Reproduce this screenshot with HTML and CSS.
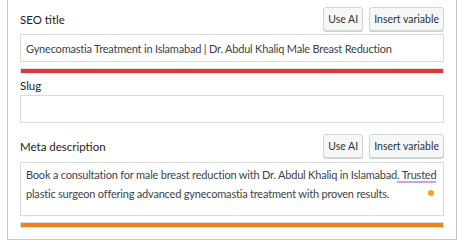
FILE: index.html
```html
<!DOCTYPE html>
<html lang="en">
<head>
  <meta charset="UTF-8" />
  <title>SEO fields</title>
  <link rel="stylesheet" href="styles.css">
</head>
<body>
  <div class="panel">
    <div class="field-head">
      <label for="seo-title">SEO title</label>
      <div class="actions">
        <button class="btn">Use AI</button>
        <button class="btn">Insert variable</button>
      </div>
    </div>
    <input type="text" id="seo-title" class="input" value="Gynecomastia Treatment in Islamabad | Dr. Abdul Khaliq Male Breast Reduction" />
    <div class="meter"><div class="meter-fill bad"></div></div>

    <label for="slug" class="plain-label">Slug</label>
    <input type="text" id="slug" class="input" value="" />

    <div class="field-head meta-head">
      <label for="meta">Meta description</label>
      <div class="actions">
        <button class="btn">Use AI</button>
        <button class="btn">Insert variable</button>
      </div>
    </div>
    <div class="textbox" id="meta">
      Book a consultation for male breast reduction with Dr. Abdul Khaliq in Islamabad<span class="hint">. Trusted</span><br>
      plastic surgeon offering advanced gynecomastia treatment with proven results.
      <span class="dot"></span>
    </div>
    <div class="meter"><div class="meter-fill ok"></div></div>
  </div>
</body>
</html>
```

FILE: styles.css
```css
:root {
  --border: #c9c9c9;
  --input-border: #dcdcde;
  --label: #1d2327;
  --text: #3c434a;
  --btn-bg: #f6f7f7;
  --red: #e0353b;
  --orange: #f0821e;
}

body {
  margin: 0;
  font-family: "Segoe UI", Lato, "Open Sans", sans-serif;
  font-size: 11px;
  background-color: #ffffff;
}

.panel {
  margin-left: 7px;
  width: 450px;
  box-sizing: border-box;
  border: 1px solid var(--border);
  border-top: none;
  padding: 7px 12px 11px 12px;
}

.field-head {
  display: flex;
  justify-content: space-between;
  align-items: center;
  height: 24px;
  margin-bottom: 3px;
}

.meta-head {
  margin-top: 11px;
  margin-bottom: 4px;
}

label {
  color: var(--label);
  font-size: 11.5px;
  line-height: 17px;
}

.plain-label {
  display: block;
  margin-top: 3px;
  margin-bottom: 1px;
}

.actions {
  display: flex;
  gap: 6px;
}

.btn {
  font-family: inherit;
  font-size: 10.5px;
  color: #2c3338;
  background-color: var(--btn-bg);
  border: 1px solid #d3d4d6;
  border-radius: 3px;
  box-shadow: 0 1px 0 #d0d0d0;
  box-sizing: border-box;
  height: 24px;
  padding: 0 4px;
  cursor: pointer;
}

.input {
  display: block;
  width: 100%;
  height: 28px;
  box-sizing: border-box;
  border: 1px solid var(--input-border);
  border-radius: 0;
  margin: 0;
  padding: 0 5px;
  font-family: inherit;
  font-size: 11px;
  letter-spacing: -0.2px;
  color: var(--text);
}

.textbox {
  position: relative;
  height: 54px;
  box-sizing: border-box;
  border: 1px solid var(--input-border);
  padding: 2px 5px;
  line-height: 19px;
  font-size: 11px;
  letter-spacing: -0.2px;
  color: var(--text);
}

.hint {
  border-bottom: 2px solid #cf9ef0;
}

.dot {
  position: absolute;
  right: 9px;
  top: 27px;
  width: 6px;
  height: 6px;
  border-radius: 50%;
  background-color: #f7a21b;
}

.meter {
  margin-top: 6px;
  height: 6px;
  box-sizing: border-box;
  border: 1px solid #e2e2e2;
  background-color: #e2e2e2;
}

.meter-fill {
  height: 100%;
  width: 100%;
}

.bad {
  background-color: var(--red);
}

.ok {
  background-color: var(--orange);
}
```
